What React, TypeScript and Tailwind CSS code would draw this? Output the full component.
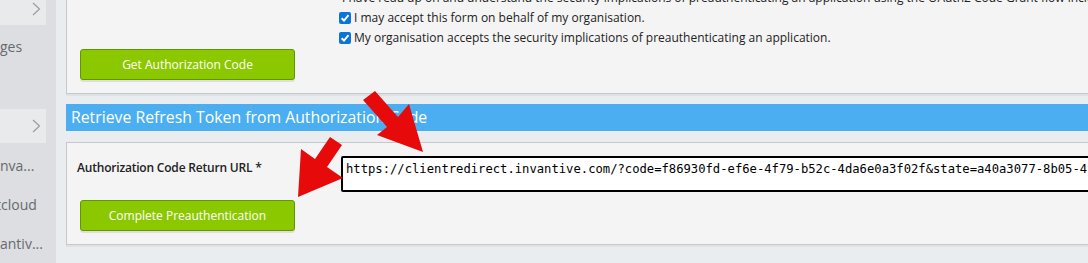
import React from "react";

const font = { fontFamily: '"Open Sans", "Liberation Sans", sans-serif' };

function Chevron() {
  return (
    <svg width="9" height="14" viewBox="0 0 9 14" className="text-[#9a9da2]">
      <path d="M1 1 L7.5 7 L1 13" fill="none" stroke="currentColor" strokeWidth="1.2" />
    </svg>
  );
}

function CheckBox() {
  return (
    <span className="inline-flex h-[12px] w-[12px] items-center justify-center rounded-[2px] bg-[#0b74db]">
      <svg width="10" height="10" viewBox="0 0 10 10">
        <path d="M1.6 5.2 L4 7.5 L8.5 2.2" fill="none" stroke="white" strokeWidth="1.9" />
      </svg>
    </span>
  );
}

function GreenButton({ label }: { label: string }) {
  return (
    <button
      type="button"
      className="h-[31px] w-[215px] rounded-[3px] border border-[#5d9a00] bg-[#8cc800] text-[12px] text-white shadow-[0_2px_0_#dedede]"
    >
      {label}
    </button>
  );
}

function Sidebar() {
  return (
    <div className="flex w-[56px] shrink-0 flex-col overflow-hidden bg-[#dcdee1] text-[14px] text-[#666a70]">
      <div className="flex h-[25px] w-[46px] items-start justify-end bg-[#e8eaec] pr-[5px] pt-[2px]">
        <Chevron />
      </div>
      <div className="h-[84px] whitespace-nowrap pt-[13px] leading-[18px]">ges</div>
      <div className="flex h-[34px] w-[46px] items-center justify-end bg-[#e8eaec] pr-[5px]">
        <Chevron />
      </div>
      <div className="flex flex-col whitespace-nowrap pt-[3px] leading-[18px]">
        <div className="flex h-[39px] items-center">nva...</div>
        <div className="-ml-[4px] flex h-[39px] items-center">tcloud</div>
        <div className="flex h-[39px] items-center">antiv...</div>
      </div>
    </div>
  );
}

export default function App() {
  return (
    <div
      className="relative flex h-[263px] w-[1088px] overflow-hidden bg-[#eaedf0]"
      style={font}
    >
      <Sidebar />

      <div className="flex w-[1100px] shrink-0 flex-col pl-[10px]">
        {/* Preauthenticate panel (cut at top) */}
        <div className="-mt-[14px] border border-[#c6c8ca] bg-[#f4f4f4] pb-[13px] pl-[13px] shadow-[0_2px_0_#dfe2e5]">
          <div className="ml-[259px] flex h-[21px] items-center gap-[3px] whitespace-nowrap text-[12px] text-[#222]">
            <span className="w-[12px]" />
            I have read up on and understand the security implications of preauthenticating an application using the OAuth2 Code Grant flow including the risks.
          </div>
          <div className="ml-[259px] flex h-[20px] items-center gap-[3px] whitespace-nowrap text-[12px] text-[#222]">
            <CheckBox />
            I may accept this form on behalf of my organisation.
          </div>
          <div className="ml-[259px] flex h-[20px] items-center gap-[3px] whitespace-nowrap text-[12px] text-[#222]">
            <CheckBox />
            My organisation accepts the security implications of preauthenticating an application.
          </div>
          <div className="mt-[1px]">
            <GreenButton label="Get Authorization Code" />
          </div>
        </div>

        {/* Section header */}
        <div className="mt-[10px] flex h-[27px] items-center bg-[#4aaef0] pl-[5px] text-[15.8px] text-white">
          Retrieve Refresh Token from Authorization Code
        </div>

        {/* Return URL panel */}
        <div className="mt-[11px] border border-[#c6c8ca] bg-[#f4f4f4] pb-[13px] pl-[13px] pt-[13px] shadow-[0_2px_0_#dfe2e5]">
          <div className="flex items-start">
            <div className="-ml-[3px] w-[264px] pt-[3px] text-[12px] font-semibold tracking-[-0.2px] text-[#222]">
              Authorization Code Return URL *
            </div>
            <div
              className="h-[36px] w-[800px] overflow-hidden whitespace-nowrap rounded-[2px] border-2 border-black bg-white pl-[3px] pt-[3px] text-[12.2px] leading-[16px] text-black"
              style={{ fontFamily: '"DejaVu Sans Mono", "Liberation Mono", monospace' }}
            >
              https://clientredirect.invantive.com/?code=f86930fd-ef6e-4f79-b52c-4da6e0a3f02f&amp;state=a40a3077-8b05-4f1c-9e2a-7d3b6c0e5a11
            </div>
          </div>
          <div className="mt-[8px]">
            <GreenButton label="Complete Preauthentication" />
          </div>
        </div>
      </div>

      {/* Red annotation arrows */}
      <svg
        className="pointer-events-none absolute left-0 top-0"
        width="1088"
        height="263"
        viewBox="0 0 1088 263"
      >
        <polygon
          points="363,100 375,91 398,117 409,104 423,152 377,135 387,127"
          fill="#e60a0a"
        />
        <polygon
          points="330,137 342,145 327,167 343,178 298,197 301,149 315,159"
          fill="#e60a0a"
        />
      </svg>
    </div>
  );
}
